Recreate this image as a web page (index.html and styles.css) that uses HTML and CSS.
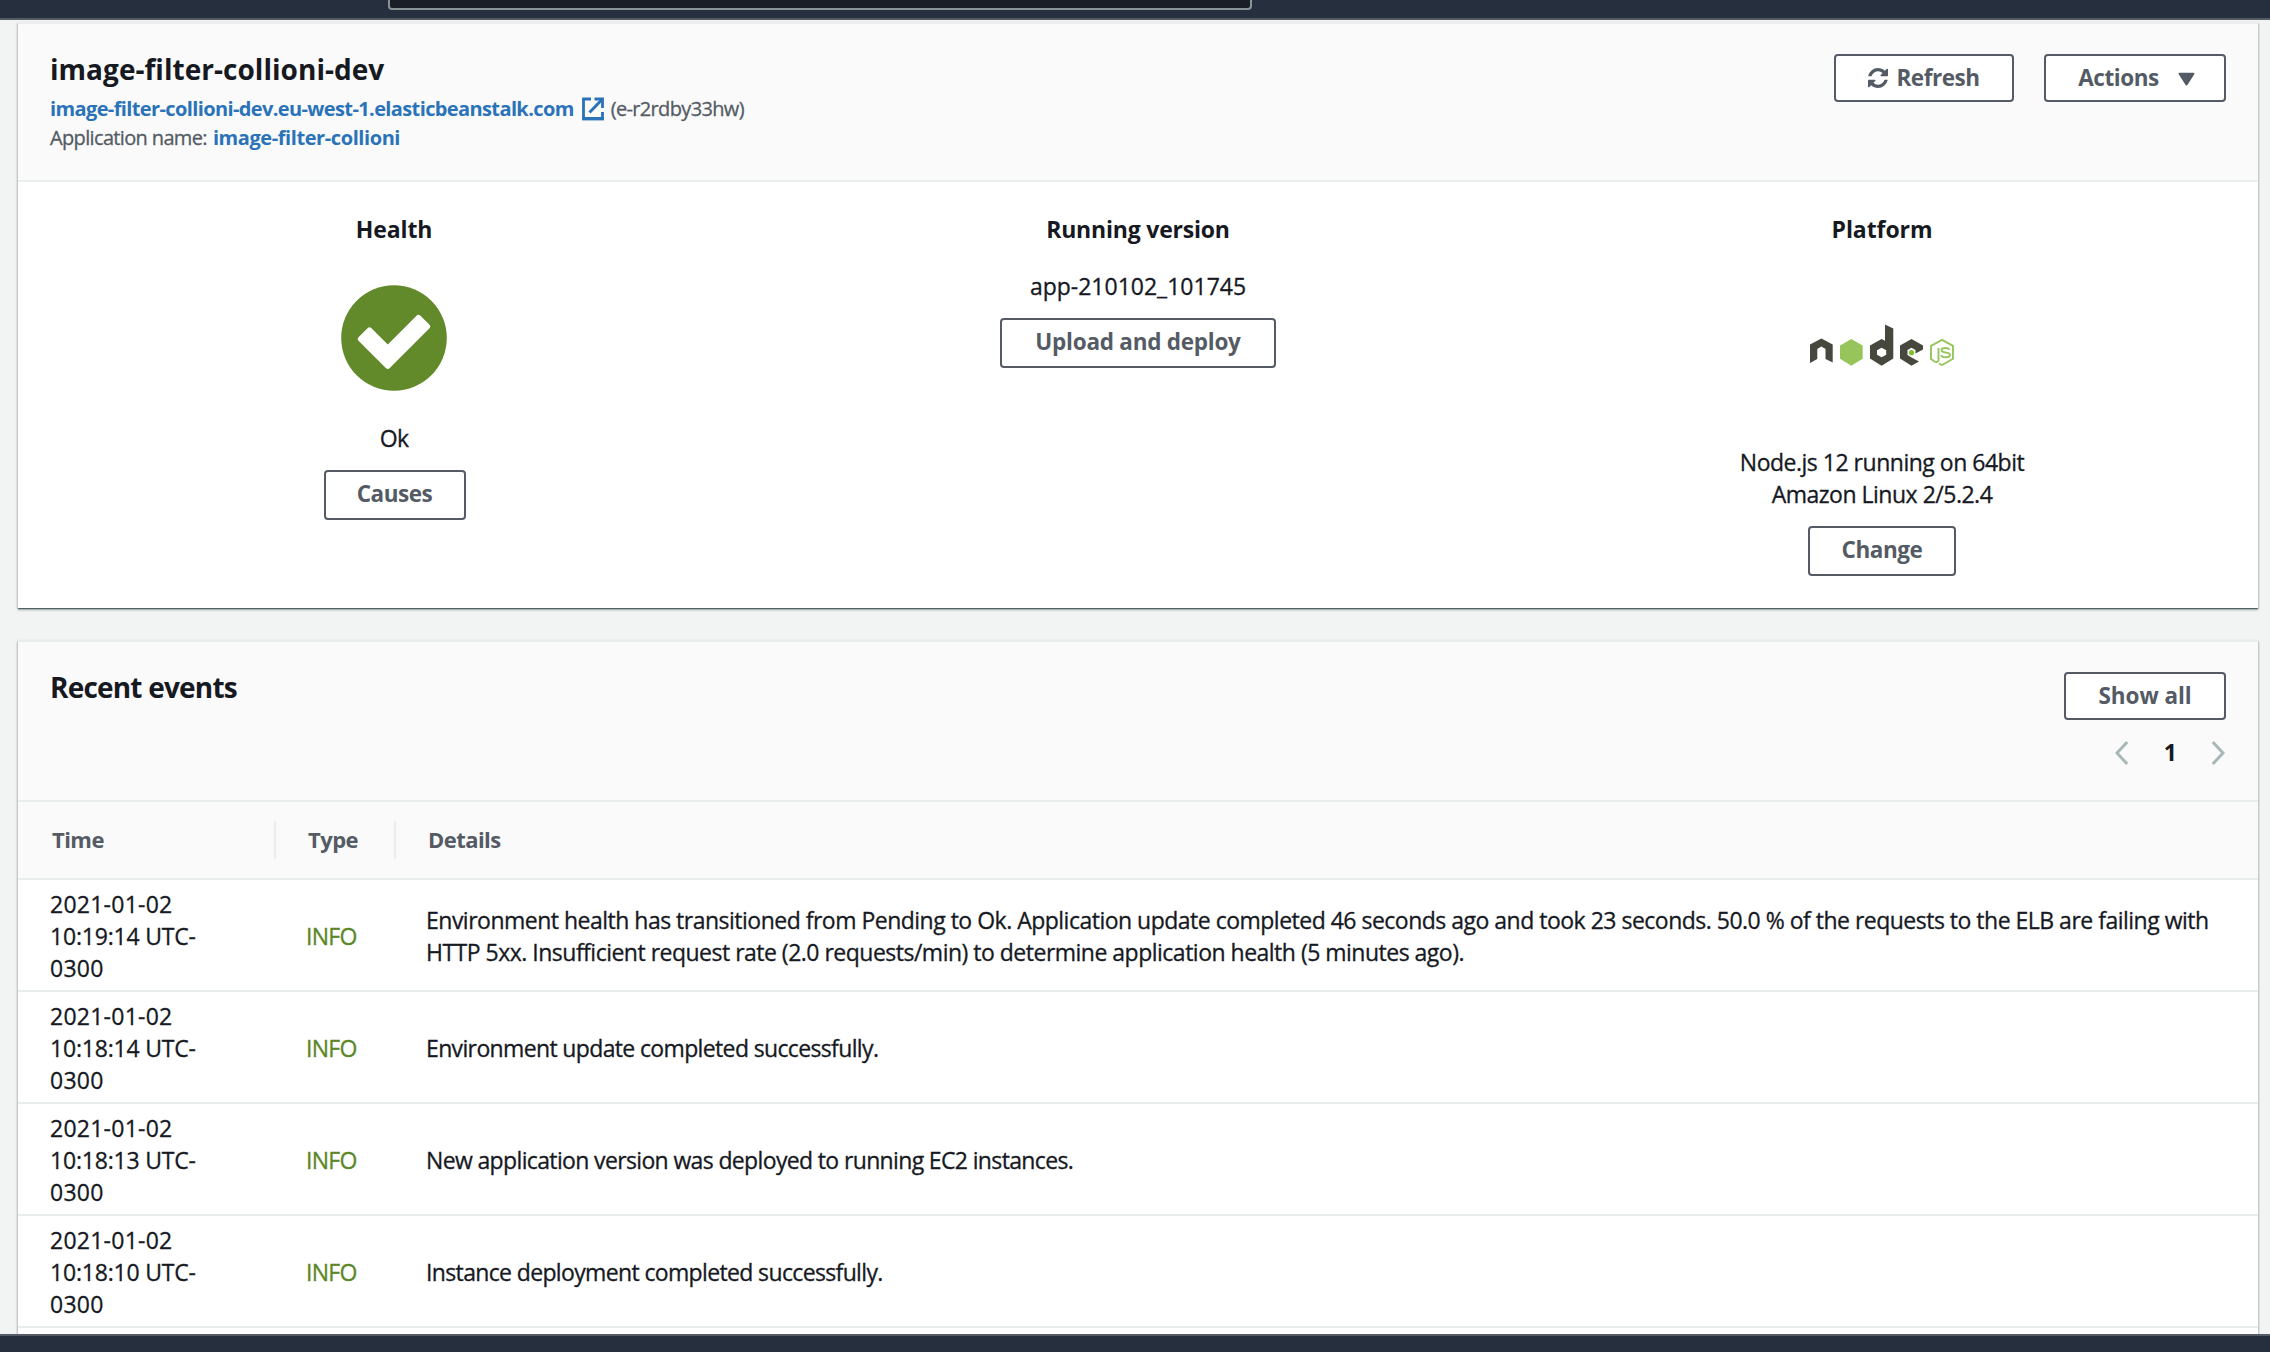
FILE: index.html
```html
<!DOCTYPE html>
<html lang="en">
<head>
<meta charset="utf-8">
<title>image-filter-collioni-dev</title>
<link rel="stylesheet" href="styles.css">
</head>
<body>
<header class="topbar"><div class="search"></div></header>
<main class="content">
  <section class="panel">
    <div class="panel-head env-head">
      <div>
        <h1 class="env-title">image-filter-collioni-dev</h1>
        <p class="env-line">
          <a class="link url">image-filter-collioni-dev.eu-west-1.elasticbeanstalk.com</a>
          <svg class="ext" viewBox="0 0 22 24" fill="none" stroke="currentColor"><path d="M9 2H1.500V21.500H20.500V15" stroke-width="2.800"/><path d="M0.200 21.700H21.800" stroke-width="3.400"/><path d="M12.500 2H20.500V11" stroke-width="2.800"/><path d="M20 2.500L7.500 15.500" stroke-width="3"/></svg>
          <span class="env-id">(e-r2rdby33hw)</span>
        </p>
        <p class="env-line"><span class="app-label">Application name:</span><a class="link app">image-filter-collioni</a></p>
      </div>
      <div class="actions">
        <button class="btn refresh"><svg class="sync" viewBox="0 0 1536 1536" fill="currentColor"><path d="M1511 928q0 5-1 7-64 268-268 434.500t-478 166.500q-146 0-282.500-55t-243.500-157l-129 129q-19 19-45 19t-45-19-19-45v-448q0-26 19-45t45-19h448q26 0 45 19t19 45-19 45l-137 137q71 66 161 102t187 36q134 0 250-65t186-179q11-17 53-117 8-23 30-23h192q13 0 22.500 9.500t9.500 22.500zm25-800v448q0 26-19 45t-45 19h-448q-26 0-45-19t-19-45 19-45l138-138q-148-137-349-137-134 0-250 65t-186 179q-11 17-53 117-8 23-30 23h-199q-13 0-22.500-9.500t-9.500-22.500v-7q65-268 270-434.500t480-166.500q146 0 284 55.500t245 156.500l130-129q19-19 45-19t45 19 19 45z"/></svg>Refresh</button>
        <button class="btn menu">Actions<svg class="caret" viewBox="0 0 16 13"><path d="M1.500 1.500H14.500L8 11.500Z" fill="currentColor" stroke="currentColor" stroke-width="2" stroke-linejoin="round"/></svg></button>
      </div>
    </div>
    <div class="summary">
      <div class="col">
        <h2 class="col-title">Health</h2>
        <svg class="health" viewBox="0 0 106 106"><circle cx="53" cy="53" r="52.800" fill="#62892a"/><path d="M46.800 81.100L19.700 54L28.500 45.200L46.800 63.500L77.500 32.800L86.300 41.600Z" fill="#fff" stroke="#fff" stroke-width="5.600" stroke-linejoin="round"/></svg>
        <p class="ok">Ok</p>
        <button class="btn tall causes">Causes</button>
      </div>
      <div class="col">
        <h2 class="col-title running">Running version</h2>
        <p class="version">app-210102_101745</p>
        <button class="btn tall upload">Upload and deploy</button>
      </div>
      <div class="col">
        <h2 class="col-title">Platform</h2>
        <svg class="node" viewBox="0 0 144 42">
          <g fill="#46483e">
            <path d="M0 20.500L11.400 14.500L22.700 20.500V38.500L15.500 35V25L11.400 22.500L7.300 25V35L0 39Z"/>
            <path fill-rule="evenodd" d="M75 0.400L83.300 4.500V34.500L71.600 41.700L60 34.500V21.500L71.600 15L75 16.800ZM71.600 23.800L67 26.300V30.800L71.600 33.300L76.200 30.800V26.300Z"/>
            <path d="M101.500 15L113 21.500V25.500L105.500 29.500V26L101.500 23.800L97.500 26V31L101.500 33.500L109 37.500L101.500 41.700L90 34.500V21.500Z"/>
          </g>
          <path d="M41.300 15L52.700 21.500V34.800L41.300 41.700L30 34.800V21.500Z" fill="#97c55b"/>
          <circle cx="101.500" cy="28.700" r="2.600" fill="#7fc02f"/>
          <g fill="none" stroke="#97c55b" stroke-width="1.900">
            <path d="M128.500 24V36.500Q127 39 124.500 37.500L121 35V21.800L132 15.800L143 21.800V34.800L132 41L129 39.500"/>
            <path d="M139.500 25.700Q138.500 24 135.500 24Q131.500 24 131.500 26.300Q131.500 28 135.500 28.500Q140 29 140 31Q140 33.200 135.800 33.200Q131.500 33.200 131.300 30.800"/>
          </g>
        </svg>
        <p class="platform">Node.js 12 running on 64bit<br>Amazon Linux 2/5.2.4</p>
        <button class="btn tall change">Change</button>
      </div>
    </div>
  </section>

  <section class="panel">
    <div class="panel-head events-head">
      <h1 class="events-title">Recent events</h1>
      <div class="events-side">
        <button class="btn showall">Show all</button>
        <div class="pager">
          <svg class="chev" viewBox="0 0 14 26"><path d="M12.200 2L2 13L12.200 24" /></svg>
          <span>1</span>
          <svg class="chev" viewBox="0 0 14 26"><path d="M1.800 2L12 13L1.800 24" /></svg>
        </div>
      </div>
    </div>
    <div class="row thead"><div class="th">Time</div><div class="th">Type</div><div class="th">Details</div></div>
    <div class="row"><div class="time">2021-01-02<br><span class="clock">10:19:14 UTC-</span><br>0300</div><div class="info">INFO</div><div class="long">Environment health has transitioned from Pending to Ok. Application update completed 46 seconds ago and took 23 seconds. 50.0 % of the requests to the ELB are failing with<br>HTTP 5xx. Insufficient request rate (2.0 requests/min) to determine application health (5 minutes ago).</div></div>
    <div class="row"><div class="time">2021-01-02<br><span class="clock">10:18:14 UTC-</span><br>0300</div><div class="info">INFO</div><div>Environment update completed successfully.</div></div>
    <div class="row"><div class="time">2021-01-02<br><span class="clock">10:18:13 UTC-</span><br>0300</div><div class="info">INFO</div><div>New application version was deployed to running EC2 instances.</div></div>
    <div class="row"><div class="time">2021-01-02<br><span class="clock">10:18:10 UTC-</span><br>0300</div><div class="info">INFO</div><div>Instance deployment completed successfully.</div></div>
    <div class="row"></div>
  </section>
</main>
<footer class="bottombar"></footer>
</body>
</html>
```
FILE: styles.css
```css
* { box-sizing: border-box; margin: 0; padding: 0; }

body {
  height: 1352px;
  display: flex;
  flex-direction: column;
  overflow: hidden;
  background: #f2f3f3;
  color: #16191f;
  font: 400 23px/32px "Open Sans", "Noto Sans", sans-serif;
  letter-spacing: -0.64px;
  -webkit-text-stroke: 0.3px;
}
h1, h2, button, .link, .thead, .pager { -webkit-text-stroke: 0; }

.topbar {
  flex: none;
  height: 20px;
  padding-left: 388px;
  background: #262f3e;
  border-bottom: 2px solid #545b64;
}
.search {
  width: 864px;
  height: 10px;
  background: #1a1f27;
  border: 2px solid #879596;
  border-top: 0;
  border-radius: 0 0 4px 4px;
}

.content { flex: 1; min-height: 0; overflow: hidden; padding: 2px 12px 0 18px; }
.panel {
  background: #fff;
  border-top: 2px solid #eaeded;
  box-shadow: 0 2px 2px rgba(0, 28, 36, .3), 1px 1px 2px 0 rgba(0, 28, 36, .15), -1px 1px 2px 0 rgba(0, 28, 36, .15), 0 1px 0 #879596;
  margin-bottom: 32px;
}
.panel-head {
  display: flex;
  justify-content: space-between;
  background: #fafafa;
  border-bottom: 2px solid #eaeded;
}

.env-head { height: 158px; padding: 27px 32px 0; }
.env-title { font-size: 28px; line-height: 36px; letter-spacing: 0.03px; }
.env-line {
  display: flex;
  align-items: center;
  height: 29px;
  font-size: 20px;
  line-height: 29px;
  color: #545b64;
}
.env-title + .env-line { margin-top: 6px; }
.env-line span, .env-line a { padding-top: 1px; }
.link { color: #2b73b9; font-weight: 700; }
.url { letter-spacing: -0.62px; }
.ext { width: 22px; height: 24px; margin: 2px 7px 0 8px; color: #2b73b9; }
.env-id { letter-spacing: -0.65px; }
.app-label { letter-spacing: -0.65px; }
.app { margin-left: 6px; letter-spacing: -0.42px; }

.btn {
  display: flex;
  align-items: center;
  justify-content: center;
  height: 48px;
  border: 2px solid #545b64;
  border-radius: 4px;
  background: #fff;
  color: #545b64;
  font: 700 22.5px/32px "Open Sans", "Noto Sans", sans-serif;
  letter-spacing: -0.45px;
  white-space: nowrap;
}
.tall { height: 50px; padding-bottom: 2px; }

.actions { display: flex; gap: 30px; padding-top: 3px; }
.refresh { width: 180px; }
.menu { width: 182px; padding-left: 3px; }
.sync { width: 20px; height: 20px; margin: 0 8px 0 0; }
.caret { width: 17px; height: 14px; margin: 2px 0 0 19px; }

.summary { display: grid; grid-template-columns: repeat(3, 1fr); height: 426px; padding: 31px 4px 0; }
.col { display: flex; flex-direction: column; align-items: center; }
.col-title { font-size: 23px; line-height: 32px; letter-spacing: -0.08px; }
.running { letter-spacing: -0.2px; }
.health { width: 106px; height: 106px; margin-top: 40px; }
.ok { margin: 31px 0 16px; }
.version { margin: 25px 0 16px; letter-spacing: 0; }
.causes { width: 142px; margin-left: 1px; }
.upload { width: 276px; letter-spacing: -0.25px; }
.change { width: 148px; }
.node { width: 144px; height: 42px; margin-top: 79px; }
.platform { margin: 80px 0 16px; text-align: center; letter-spacing: -0.49px; }

.events-head { height: 160px; padding: 0 32px; }
.events-title { padding-top: 27px; font-size: 28px; line-height: 36px; letter-spacing: -0.8px; }
.events-side { display: flex; flex-direction: column; align-items: flex-end; padding-top: 30px; }
.showall { width: 162px; letter-spacing: -0.05px; }
.pager { display: flex; align-items: center; margin-top: 16px; padding-right: 1px; font-weight: 700; }
.pager span { width: 82px; text-align: center; padding-bottom: 2px; }
.chev { width: 14px; height: 26px; fill: none; stroke: #aab7b8; stroke-width: 3; }

.row {
  display: grid;
  grid-template-columns: 256px 120px 1fr;
  align-items: center;
  height: 112px;
  padding: 1px 0 0 32px;
  border-bottom: 2px solid #eaeded;
  white-space: nowrap;
}
.thead { height: 78px; padding-top: 0; background: #fafafa; color: #545b64; font-weight: 700; }
.th { height: 38px; line-height: 36px; font-size: 22px; letter-spacing: -0.55px; padding-left: 2px; }
.th:not(:last-child) { border-right: 2px solid #eaeded; margin-right: 30px; }
.time { letter-spacing: 0.25px; }
.clock { letter-spacing: -0.2px; }
.info { color: #5c8727; letter-spacing: -0.7px; }
.long { letter-spacing: -0.505px; }

.bottombar { flex: none; height: 18px; background: #262f3e; border-top: 2px solid #545b64; }
```
